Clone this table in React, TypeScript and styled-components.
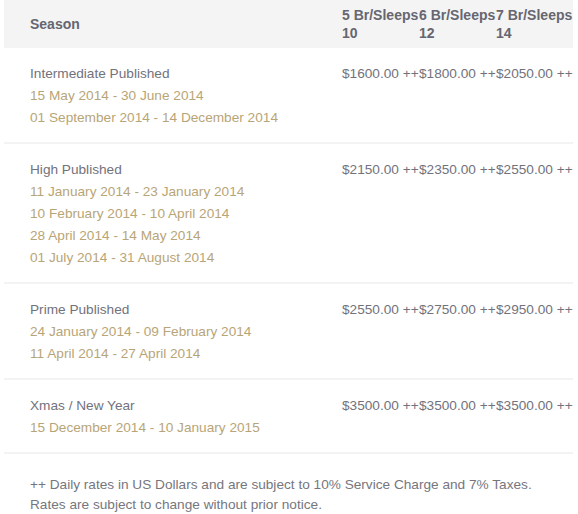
import React from "react";
import styled, { createGlobalStyle } from "styled-components";

const Global = createGlobalStyle`
  html, body { margin: 0; padding: 0; background: #ffffff; }
  body { font-family: "Liberation Sans", Arial, sans-serif; font-size: 14px; }
`;

const Wrap = styled.div`
  padding: 0 5px 0 4px;
`;

const HeaderRow = styled.div`
  display: grid;
  grid-template-columns: 338px repeat(3, 77px);
  background: #f4f4f4;
  padding: 6px 0;
  color: #666670;
  font-weight: bold;
  font-size: 14px;
  line-height: 18px;
`;

const HeadSeason = styled.div`
  padding-left: 26px;
  align-self: center;
`;

const HeadCol = styled.div``;

const Row = styled.div`
  display: grid;
  grid-template-columns: 338px repeat(3, 77px);
  padding: 15px 0 13px;
  border-bottom: 2px solid #f3f3f3;
  line-height: 22px;
  font-size: 13.65px;
`;

const SeasonCell = styled.div`
  padding-left: 26px;
`;

const SeasonName = styled.div`
  color: #72727c;
`;

const DateLine = styled.div`
  color: #b8a577;
`;

const Price = styled.div`
  color: #72727c;
  white-space: nowrap;
`;

const Footer = styled.div`
  padding: 21px 0 0 26px;
  color: #76767e;
  line-height: 20px;
  font-size: 13.65px;
`;

type Season = { name: string; dates: string[]; prices: string[] };

const seasons: Season[] = [
  {
    name: "Intermediate Published",
    dates: ["15 May 2014 - 30 June 2014", "01 September 2014 - 14 December 2014"],
    prices: ["$1600.00 ++", "$1800.00 ++", "$2050.00 ++"],
  },
  {
    name: "High Published",
    dates: [
      "11 January 2014 - 23 January 2014",
      "10 February 2014 - 10 April 2014",
      "28 April 2014 - 14 May 2014",
      "01 July 2014 - 31 August 2014",
    ],
    prices: ["$2150.00 ++", "$2350.00 ++", "$2550.00 ++"],
  },
  {
    name: "Prime Published",
    dates: ["24 January 2014 - 09 February 2014", "11 April 2014 - 27 April 2014"],
    prices: ["$2550.00 ++", "$2750.00 ++", "$2950.00 ++"],
  },
  {
    name: "Xmas / New Year",
    dates: ["15 December 2014 - 10 January 2015"],
    prices: ["$3500.00 ++", "$3500.00 ++", "$3500.00 ++"],
  },
];

export default function App() {
  return (
    <Wrap>
      <Global />
      <HeaderRow>
        <HeadSeason>Season</HeadSeason>
        <HeadCol>5 Br/Sleeps 10</HeadCol>
        <HeadCol>6 Br/Sleeps 12</HeadCol>
        <HeadCol>7 Br/Sleeps 14</HeadCol>
      </HeaderRow>
      {seasons.map((s) => (
        <Row key={s.name}>
          <SeasonCell>
            <SeasonName>{s.name}</SeasonName>
            {s.dates.map((d) => (
              <DateLine key={d}>{d}</DateLine>
            ))}
          </SeasonCell>
          {s.prices.map((p, i) => (
            <Price key={i}>{p}</Price>
          ))}
        </Row>
      ))}
      <Footer>
        ++ Daily rates in US Dollars and are subject to 10% Service Charge and 7% Taxes.
        <br />
        Rates are subject to change without prior notice.
      </Footer>
    </Wrap>
  );
}
